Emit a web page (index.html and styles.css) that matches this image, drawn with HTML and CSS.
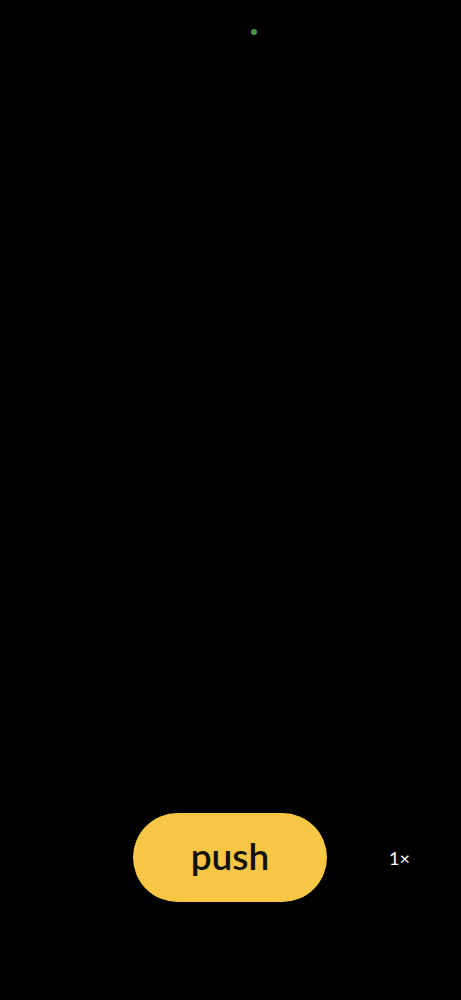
FILE: index.html
```html
<!DOCTYPE html>
<html>
<head>
<meta charset="utf-8">
<link rel="stylesheet" href="styles.css">
</head>
<body>
<div class="screen">
  <div class="top"><span class="dot"></span></div>
  <div class="spacer"></div>
  <div class="controls">
    <button class="push">push</button>
    <span class="zoom">1×</span>
  </div>
</div>
</body>
</html>
```
FILE: styles.css
```css
html, body {
  margin: 0;
  padding: 0;
  background: #000;
}
.screen {
  width: 461px;
  height: 1000px;
  display: flex;
  flex-direction: column;
  font-family: "Lato", "Open Sans", sans-serif;
}
.top {
  height: 62px;
  display: flex;
  justify-content: center;
  padding-top: 29px;
  box-sizing: border-box;
}
.dot {
  width: 6px;
  height: 6px;
  border-radius: 50%;
  background: #3f9a43;
  margin-left: 47px;
}
.spacer {
  flex: 1;
}
.controls {
  height: 188px;
  display: flex;
  align-items: flex-start;
  padding-top: 1px;
  box-sizing: border-box;
}
.push {
  margin-left: 133px;
  width: 194px;
  height: 89px;
  border: none;
  border-radius: 45px;
  background: #f6c644;
  color: #111;
  font-family: "Lato", "Open Sans", sans-serif;
  font-size: 37px;
  font-weight: 600;
  padding: 0 0 4px;
}
.zoom {
  margin-left: 62px;
  margin-top: 34px;
  color: #fff;
  font-size: 18px;
}
```
